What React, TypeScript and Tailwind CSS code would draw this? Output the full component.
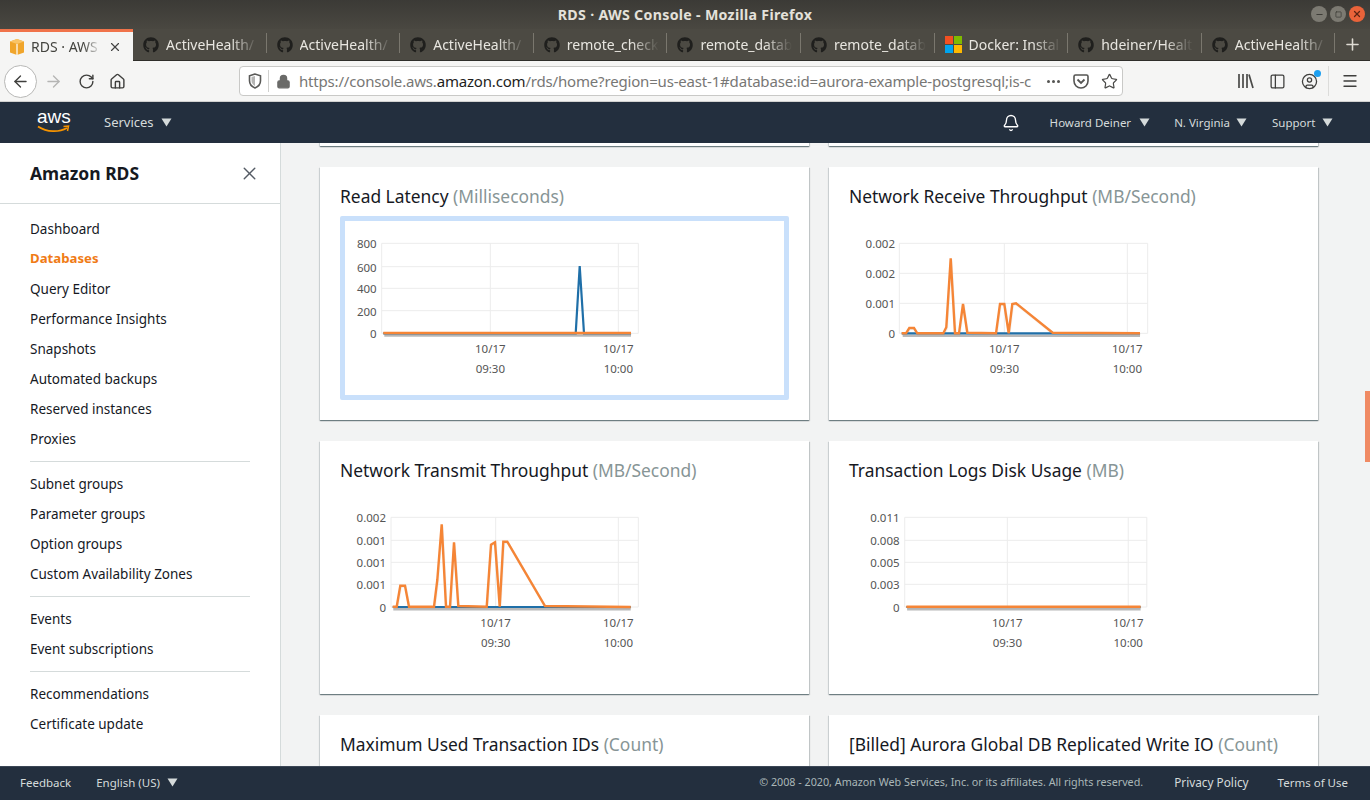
import React from 'react';
import { ArrowLeft, ArrowRight, RotateCw, Home, Lock, Star, PanelLeft, CircleUser, Menu, Bell, X, Plus, Minus, Square } from 'lucide-react';
import { FaGithub } from 'react-icons/fa';

const uiFont = 'font-["Noto_Sans",sans-serif]';

const tabs = ['ActiveHealth/', 'ActiveHealth/', 'ActiveHealth/', 'remote_check', 'remote_datab', 'remote_datab', 'Docker: Instal', 'hdeiner/Healt', 'ActiveHealth/'];

const navGroups = [
  ['Dashboard', 'Databases', 'Query Editor', 'Performance Insights', 'Snapshots', 'Automated backups', 'Reserved instances', 'Proxies'],
  ['Subnet groups', 'Parameter groups', 'Option groups', 'Custom Availability Zones'],
  ['Events', 'Event subscriptions'],
  ['Recommendations', 'Certificate update'],
];

type Pt = [number, number];

interface ChartDef {
  ox: number;
  oy: number;
  sx: number;
  left: number;
  right: number;
  vLines: number[];
  hLines: number[];
  yLabels: string[];
  labelEnd: number;
  blue: Pt[];
  orange: Pt[];
  shadow: Pt[];
}

const charts: Record<string, ChartDef> = {
  latency: {
    ox: -25, oy: -61, sx: 3, left: 185, right: 955, vLines: [511, 895], hLines: [250, 320, 385, 452, 520],
    yLabels: ['800', '600', '400', '200', '0'], labelEnd: 170,
    blue: [[190, 520], [767, 520], [779, 318], [792, 520], [933, 520]],
    orange: [[190, 519], [933, 519]],
    shadow: [[193, 519], [933, 519]],
  },
  receive: {
    ox: -24, oy: -61, sx: 3, left: 208, right: 953, vLines: [523, 892], hLines: [250, 340, 430, 520],
    yLabels: ['0.002', '0.002', '0.001', '0'], labelEnd: 195,
    blue: [[215, 520], [930, 520]],
    orange: [[215, 520], [228, 520], [238, 504], [252, 504], [262, 520], [340, 520], [349, 502], [362, 295], [375, 520], [387, 520], [399, 432], [412, 518], [498, 520], [510, 432], [523, 432], [536, 520], [547, 432], [558, 430], [668, 518], [930, 520]],
    shadow: [[218, 520], [930, 520]],
  },
  transmit: {
    ox: -25, oy: -55, sx: 3, left: 213, right: 955, vLines: [527, 895], hLines: [232, 301, 367, 433, 501],
    yLabels: ['0.002', '0.001', '0.001', '0.001', '0'], labelEnd: 198,
    blue: [[218, 501], [932, 501]],
    orange: [[218, 500], [230, 500], [241, 437], [255, 437], [267, 500], [342, 500], [352, 420], [365, 253], [378, 500], [390, 500], [402, 307], [415, 498], [500, 500], [513, 314], [525, 307], [539, 500], [550, 305], [562, 305], [675, 498], [932, 501]],
    shadow: [[220, 500], [932, 500]],
  },
  logs: {
    ox: -24, oy: -55, sx: 2.904, left: 217, right: 920, vLines: [515, 866], hLines: [232, 301, 367, 433, 501],
    yLabels: ['0.011', '0.008', '0.005', '0.003', '0'], labelEnd: 202,
    blue: [[222, 501], [902, 501]],
    orange: [[222, 500], [902, 500]],
    shadow: [[224, 500], [902, 500]],
  },
};

function Chart({ def }: { def: ChartDef }) {
  const x = (v: number) => v / def.sx + def.ox;
  const y = (v: number) => v / 3 + def.oy;
  const line = (pts: Pt[]) => pts.map(p => `${x(p[0]).toFixed(1)},${y(p[1]).toFixed(1)}`).join(' ');
  const top = def.hLines[0];
  const bottom = def.hLines[def.hLines.length - 1];

  return (
    <svg width="439" height="174" className="block">
      {def.hLines.map(v => (
        <line key={v} x1={x(def.left)} x2={x(def.right)} y1={y(v)} y2={y(v)} stroke="#ececec" strokeWidth="1" />
      ))}
      {[def.left, ...def.vLines, def.right].map(v => (
        <line key={v} x1={x(v)} x2={x(v)} y1={y(top)} y2={y(bottom)} stroke="#ececec" strokeWidth="1" />
      ))}
      {def.yLabels.map((label, i) => (
        <text key={i} x={x(def.labelEnd)} y={y(def.hLines[i]) + 0.6} textAnchor="end" dominantBaseline="central" fontSize="11.5" fill="#555555" fontFamily="Noto Sans">{label}</text>
      ))}
      {def.vLines.map((v, i) => (
        <g key={v} textAnchor="middle" fontSize="11.5" fill="#555555" fontFamily="Noto Sans">
          <text x={x(v)} y={y(bottom) + 15.5} dominantBaseline="central">10/17</text>
          <text x={x(v)} y={y(bottom) + 35.5} dominantBaseline="central">{i === 0 ? '09:30' : '10:00'}</text>
        </g>
      ))}
      <polyline points={line(def.shadow)} transform="translate(0 2.5)" fill="none" stroke="#8a8a8a" strokeOpacity="0.6" strokeWidth="2.5" />
      <polyline points={line(def.orange)} transform="translate(0.5 1)" fill="none" stroke="#8a8a8a" strokeOpacity="0.12" strokeWidth="2.5" />
      <polyline points={line(def.blue)} fill="none" stroke="#1f6fa8" strokeWidth="2.2" />
      <polyline points={line(def.orange)} fill="none" stroke="#f58536" strokeWidth="2.4" />
    </svg>
  );
}

function MetricCard({ title, unit, chart, selected }: { title?: string; unit?: string; chart?: ChartDef; selected?: boolean }) {
  return (
    <div className="h-[253px] bg-white px-5 shadow-[0_1px_1px_0_rgba(0,28,36,0.4),1px_1px_1px_0_rgba(0,28,36,0.15),-1px_1px_1px_0_rgba(0,28,36,0.1)]">
      <div className="h-[49px] pt-[17px] text-[17.4px] leading-[25px] text-[#16191f] whitespace-nowrap">
        {title} <span className="text-[#879596]">{unit}</span>
      </div>
      {chart && (
        <div className={`w-[449px] h-[184px] rounded-[2px] border-[5px] ${selected ? 'border-[#c9e0fb]' : 'border-transparent'}`}>
          <Chart def={chart} />
        </div>
      )}
    </div>
  );
}

function CubeIcon() {
  return (
    <svg width="16" height="18" viewBox="0 0 16 18" className="shrink-0">
      <path d="M8 1 1 3.5v11L8 17l7-2.5v-11z" fill="#f0a52b" />
      <path d="M1 3.5 8 6l7-2.5L8 1z" fill="#f9c467" />
      <path d="M8 6v11" stroke="#fff" strokeWidth="1.2" />
    </svg>
  );
}

function WindowsIcon() {
  return (
    <span className="grid grid-cols-[8px_8px] grid-rows-[8px_8px] gap-px shrink-0">
      <span className="bg-[#f25022]" />
      <span className="bg-[#7fba00]" />
      <span className="bg-[#00a4ef]" />
      <span className="bg-[#ffb900]" />
    </span>
  );
}

function Caret({ className }: { className?: string }) {
  return (
    <svg width="11" height="9" viewBox="0 0 11 9" className={className}>
      <path d="M0.5 0.5h10L5.5 8.5z" fill="currentColor" />
    </svg>
  );
}

function BrowserChrome() {
  return (
    <div className="shrink-0">
      <div className="relative h-[29px] bg-gradient-to-b from-[#3b3a36] to-[#4a4841] flex items-center justify-center">
        <span className="text-[14.2px] font-bold text-[#e4e1da] tracking-[0.3px]">RDS · AWS Console - Mozilla Firefox</span>
        <div className="absolute right-[5px] top-[6px] flex gap-[3px]">
          <span className="w-[16px] h-[16px] rounded-full bg-[#7c7a72] flex items-center justify-center text-[#3d3c37]"><Minus size={9} strokeWidth={3} /></span>
          <span className="w-[16px] h-[16px] rounded-full bg-[#7c7a72] flex items-center justify-center text-[#3d3c37]"><Square size={7} strokeWidth={2.5} /></span>
          <span className="w-[16px] h-[16px] rounded-full bg-[#e9633a] flex items-center justify-center text-[#5c2413]"><X size={10} strokeWidth={3} /></span>
        </div>
      </div>
      <div className="h-[32px] bg-[#4c4a43] border-b border-[#2f2e2a] flex items-stretch">
        <div className="w-[133px] h-[32px] bg-[#f5f5f4] border-t-[3px] border-[#f0734a] flex items-center pl-[9px] gap-[6px] shrink-0">
          <CubeIcon />
          <span className="w-[70px] overflow-hidden whitespace-nowrap text-[14px] text-[#44443f] [mask-image:linear-gradient(to_right,black_75%,transparent)]">RDS · AWS Console</span>
          <X size={14} className="text-[#444444] ml-[1px]" />
        </div>
        {tabs.map((t, i) => (
          <div key={i} className="w-[133.6px] shrink-0 flex items-center pl-[10px] gap-[7px] relative">
            {t.startsWith('Docker') ? <WindowsIcon /> : <FaGithub size={16} className="text-[#1f1f1d] shrink-0" />}
            <span className="w-[92px] overflow-hidden whitespace-nowrap text-[14px] text-[#e8e6e0] [mask-image:linear-gradient(to_right,black_70%,transparent)]">{t}</span>
            <span className="absolute right-0 top-[4px] h-[20px] w-px bg-[#7a776e]" />
          </div>
        ))}
        <div className="flex-1 flex items-center justify-center text-[#dedbd3]">
          <Plus size={19} />
        </div>
      </div>
      <div className="h-[41px] bg-[#f5f5f4] border-b border-[#d2d2d0] flex items-center text-[#3f3f3d]">
        <div className="w-[33px] h-[33px] ml-[4px] rounded-full border border-[#b8b8b6] bg-white flex items-center justify-center shrink-0">
          <ArrowLeft size={19} strokeWidth={1.7} />
        </div>
        <ArrowRight size={19} strokeWidth={1.7} className="ml-[7px] text-[#b5b5b3] shrink-0" />
        <RotateCw size={17} strokeWidth={2} className="ml-[15px] shrink-0" />
        <Home size={17} strokeWidth={2} className="ml-[14px] shrink-0" />
        <div className="ml-[113px] w-[884px] h-[30px] bg-white rounded-[4px] border border-[#c9c9c7] flex items-center shrink-0">
          <svg width="14" height="16" viewBox="0 0 14 16" className="ml-[8px] shrink-0 text-[#5a5a58]">
            <path d="M7 1 1.5 2.8v5C1.5 11.5 4.5 14 7 15c2.500-1 5.500-3.500 5.500-7.200v-5z" fill="none" stroke="currentColor" strokeWidth="1.6" />
            <path d="M7 3v10C5.500 12 3.500 10.500 3.500 8V4z" fill="currentColor" opacity="0.45" />
          </svg>
          <span className="ml-[6px] h-[22px] w-px bg-[#d0d0ce] shrink-0" />
          <Lock size={15} fill="#6a6a68" className="ml-[7px] text-[#6a6a68] shrink-0" />
          <span className="ml-[8px] w-[739px] whitespace-nowrap text-[15px] leading-[28px] text-[#777775] tracking-[-0.18px] shrink-0">
            https://console.aws.<span className="text-[#1e1e1c]">amazon.com</span>/rds/home?region=us-east-1#database:id=aurora-example-postgresql;is-c
          </span>
          <span className="ml-[9px] flex gap-[2px] shrink-0">
            <span className="w-[3px] h-[3px] rounded-full bg-[#555553]" />
            <span className="w-[3px] h-[3px] rounded-full bg-[#555553]" />
            <span className="w-[3px] h-[3px] rounded-full bg-[#555553]" />
          </span>
          <svg width="16" height="15" viewBox="0 0 16 15" className="ml-[13px] shrink-0">
            <path d="M1 2.500A1.500 1.500 0 0 1 2.500 1h11A1.500 1.500 0 0 1 15 2.500V7a7 7 0 0 1-14 0z" fill="none" stroke="#555553" strokeWidth="1.6" />
            <path d="m4.500 5.500 3.500 3.500 3.500-3.500" fill="none" stroke="#555553" strokeWidth="1.8" />
          </svg>
          <Star size={17} strokeWidth={1.7} className="ml-[12px] text-[#4a4a48] shrink-0" />
        </div>
        <svg width="17" height="16" viewBox="0 0 17 16" className="ml-[114px] shrink-0">
          <path d="M2 1v14M6 1v14M10 1v14M12 1.500l4 13.500" stroke="#4a4a48" strokeWidth="1.700" fill="none" />
        </svg>
        <PanelLeft size={17} strokeWidth={1.8} className="ml-[15px] shrink-0" />
        <span className="relative ml-[15px] shrink-0 flex">
          <CircleUser size={17} strokeWidth={1.8} />
          <span className="absolute -right-[3px] -top-[3px] w-[7px] h-[7px] rounded-full bg-[#1c9ff0]" />
        </span>
        <span className="ml-[10px] h-[30px] w-px bg-[#dcdcda] shrink-0" />
        <Menu size={18} strokeWidth={1.8} className="ml-[12px] shrink-0" />
      </div>
    </div>
  );
}

function TopNav() {
  return (
    <div className="h-[41px] bg-[#232f3e] flex items-center shrink-0 text-[#d5dbdb]">
      <div className="ml-[37px] w-[34px] relative h-[41px] shrink-0">
        <span className="absolute left-0 top-[4px] font-['Liberation_Sans',sans-serif] text-[19px] leading-[22px] text-white">aws</span>
        <svg width="33" height="9" viewBox="0 0 33 9" className="absolute left-0 top-[23px]">
          <path d="M1 1.500C10 7.500 22 7.500 30 3" fill="none" stroke="#f79400" strokeWidth="1.800" />
          <path d="M26.500 1.500 31.500 1 30.500 6" fill="none" stroke="#f79400" strokeWidth="1.500" />
        </svg>
      </div>
      <span className="ml-[33px] text-[13px]">Services</span>
      <Caret className="ml-[7px]" />
      <Bell size={18} strokeWidth={1.8} className="ml-[830px] text-white shrink-0" />
      <span className="ml-[30px] text-[11.500px] whitespace-nowrap">Howard Deiner</span>
      <Caret className="ml-[8px]" />
      <span className="ml-[24px] text-[11.500px] whitespace-nowrap">N. Virginia</span>
      <Caret className="ml-[6px]" />
      <span className="ml-[25px] text-[11.500px]">Support</span>
      <Caret className="ml-[7px]" />
    </div>
  );
}

function Sidebar() {
  return (
    <aside className="w-[281px] shrink-0 bg-white border-r border-[#d5dbdb] overflow-hidden">
      <div className="h-[61px] border-b border-[#d5dbdb] flex items-center justify-between pl-[30px] pr-[20px]">
        <span className="text-[17.500px] font-bold text-[#16191f]">Amazon RDS</span>
        <X size={21} strokeWidth={1.6} className="text-[#545b64]" />
      </div>
      <div className="pt-[10px]">
        {navGroups.map((group, i) => (
          <div key={i}>
            {i > 0 && <div className="mx-[30px] mt-[7px] mb-[7px] h-px bg-[#d5dbdb]" />}
            {group.map(item => (
              <div key={item} className={`h-[30px] pl-[30px] flex items-center whitespace-nowrap ${item === 'Databases' ? 'text-[13.2px] font-bold text-[#f07b16]' : 'text-[13.500px] text-[#16191f]'}`}>
                {item}
              </div>
            ))}
          </div>
        ))}
      </div>
    </aside>
  );
}

function Footer() {
  return (
    <div className="h-[34px] pb-[2px] bg-[#232f3e] border-t border-[#3b4655] flex items-center shrink-0 text-[#d5dbdb] text-[11.500px] whitespace-nowrap">
      <span className="ml-[20px]">Feedback</span>
      <span className="ml-[25px]">English (US)</span>
      <Caret className="ml-[7px]" />
      <span className="ml-auto text-[10.75px] text-[#aab7b8]">© 2008 - 2020, Amazon Web Services, Inc. or its affiliates. All rights reserved.</span>
      <span className="ml-[31px] text-[11.8px]">Privacy Policy</span>
      <span className="ml-[29px] mr-[22px]">Terms of Use</span>
    </div>
  );
}

export default function App() {
  return (
    <div className={`w-[1370px] h-[800px] flex flex-col overflow-hidden ${uiFont}`}>
      <BrowserChrome />
      <TopNav />
      <div className="flex-1 flex min-h-0">
        <Sidebar />
        <main className="relative flex-1 overflow-hidden bg-[#f2f3f3] pl-[39px]">
          <div className="grid grid-cols-[489px_489px] gap-x-5 gap-y-[21px] mt-[-250px]">
            <MetricCard />
            <MetricCard />
            <MetricCard title="Read Latency" unit="(Milliseconds)" chart={charts.latency} selected />
            <MetricCard title="Network Receive Throughput" unit="(MB/Second)" chart={charts.receive} />
            <MetricCard title="Network Transmit Throughput" unit="(MB/Second)" chart={charts.transmit} />
            <MetricCard title="Transaction Logs Disk Usage" unit="(MB)" chart={charts.logs} />
            <MetricCard title="Maximum Used Transaction IDs" unit="(Count)" />
            <MetricCard title="[Billed] Aurora Global DB Replicated Write IO" unit="(Count)" />
          </div>
          <div className="absolute right-0 top-[248px] w-[5px] h-[71px] bg-[#f08a63]" />
        </main>
      </div>
      <Footer />
    </div>
  );
}
